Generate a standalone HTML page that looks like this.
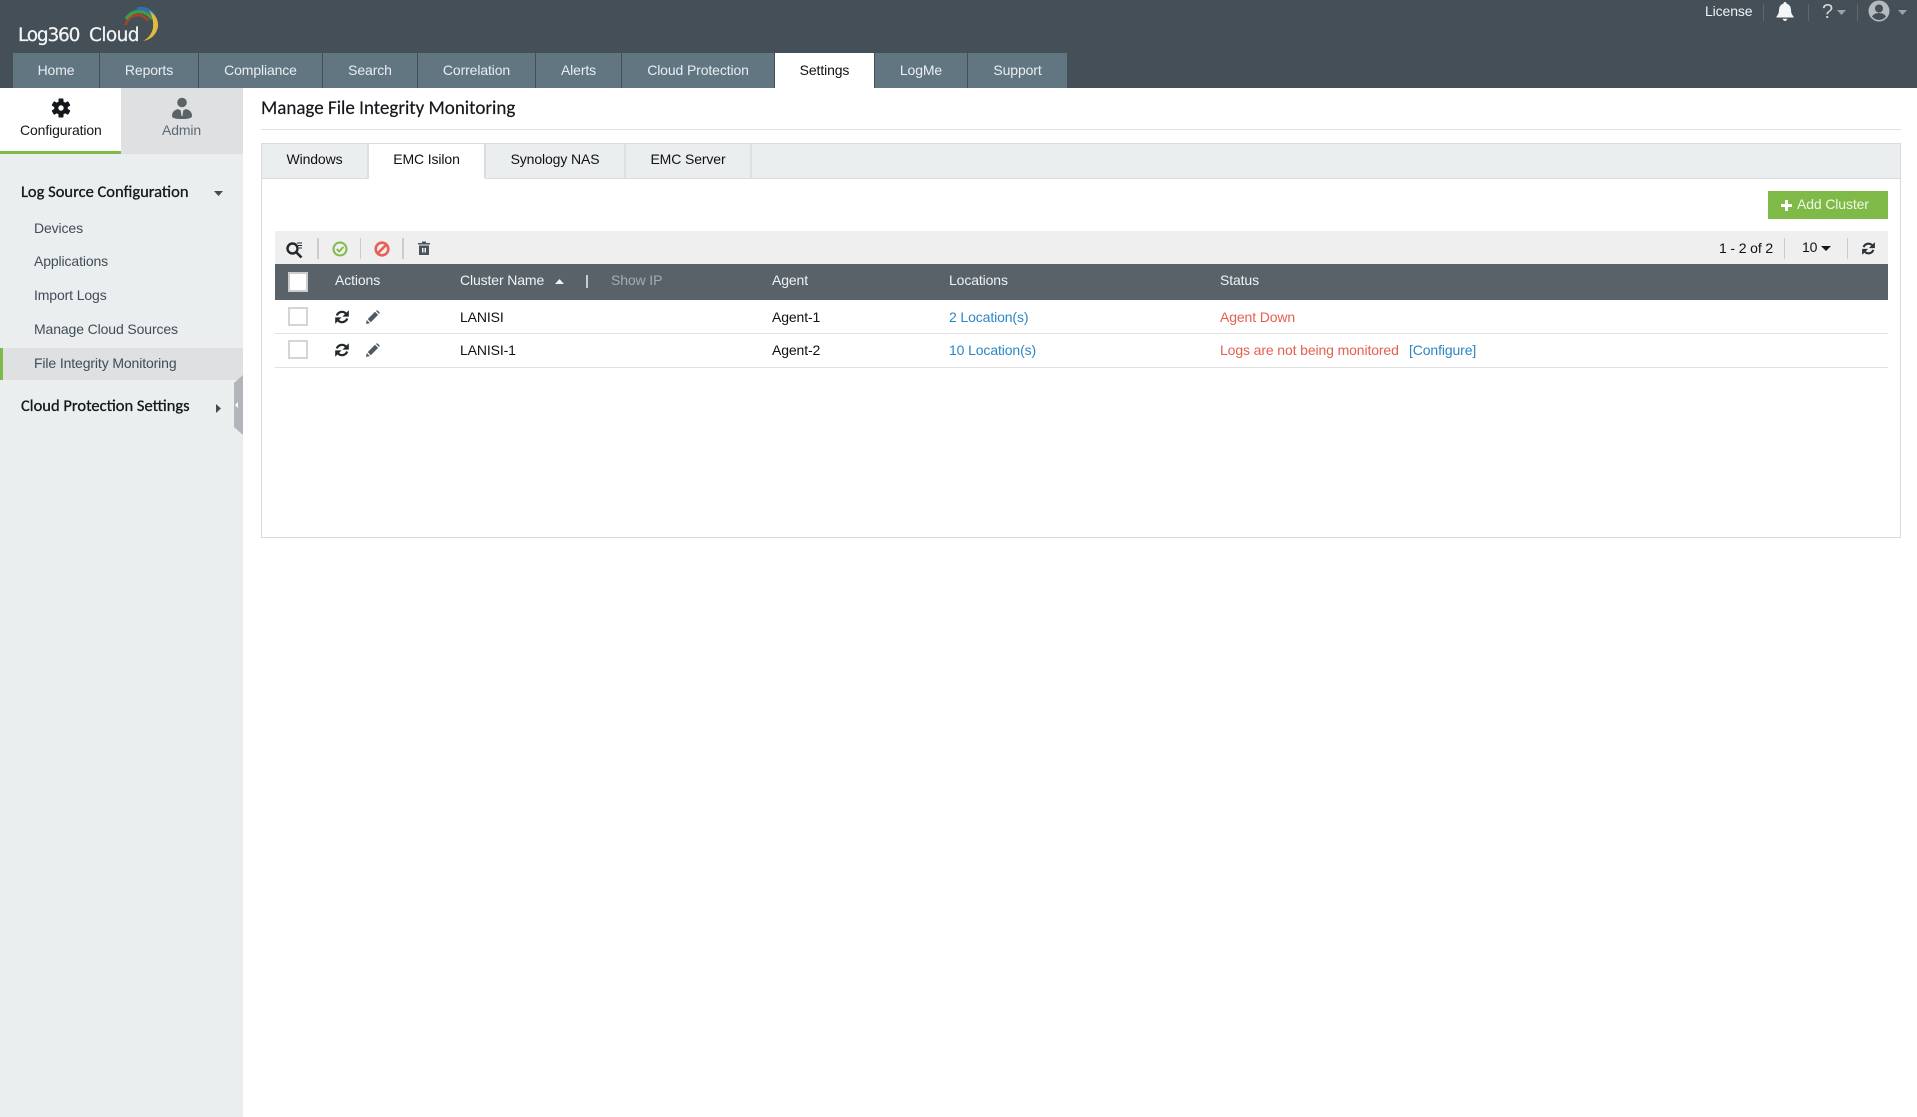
<!DOCTYPE html>
<html><head><meta charset="utf-8"><title>Manage File Integrity Monitoring</title>
<style>
*{box-sizing:border-box}
html,body{margin:0;padding:0;background:#fff;width:1917px;height:1117px;overflow:hidden}
body{position:relative;font-family:"Liberation Sans",sans-serif;font-size:14px;color:#111;letter-spacing:-.12px}
.a{position:absolute}
.t{position:absolute;white-space:nowrap;line-height:20px;height:20px}
.nav{position:absolute;top:53px;height:35px;background:#627682;color:#e8eef2;text-align:center;line-height:35px}
.lato{font-family:Carlito,"Liberation Sans",sans-serif;font-weight:400;font-size:16.5px;color:#14181c;letter-spacing:0;-webkit-text-stroke:.3px #14181c}
.side{color:#3f4d57;left:34px}
.tab{position:absolute;top:144px;height:35px;background:#ebeeef;border-right:2px solid #dde0e2;border-bottom:1px solid #d8dcde;text-align:center;line-height:30px}
.cb{position:absolute;left:288px;width:20px;height:19px;background:#fff;border:2px solid #d2d6d8}
svg{position:absolute;overflow:visible}
.link{color:#2b86c5}.red{color:#e55f4f}
.sep{position:absolute;background:#ccc}
.logo{font-size:18.5px;line-height:22px;height:22px;color:#f2f4f5;font-family:'DejaVu Sans',sans-serif;-webkit-text-stroke:.25px #f2f4f5}
</style></head><body>
<svg width="0" height="0" style="position:absolute"><defs>
<symbol id="ref" viewBox="0 0 16 16"><g fill="currentColor"><path d="M2.800 6.500A5.500 5.500 0 0 1 11.800 4.400" stroke="currentColor" stroke-width="2.200" fill="none"/><path d="M14.800 1.200V7.600H8.400Z"/><path d="M13.200 9.500A5.500 5.500 0 0 1 4.200 11.600" stroke="currentColor" stroke-width="2.200" fill="none"/><path d="M1.200 14.800V8.400H7.600Z"/></g></symbol>
<symbol id="pen" viewBox="0 0 14 14"><path d="M0 14L.8 10 3.900 13.100ZM1.700 9.100L9 1.800 12.100 4.900 4.800 12.200ZM9.900 .9Q10.900 -.1 11.900 .7L13.200 2Q14.100 3 13 4L9.900 .9Z" fill="#4d5a63"/></symbol>
</defs></svg>

<!-- header -->
<div class="a" style="left:0;top:0;width:1917px;height:88px;background:#444f57"></div>
<div class="t logo" style="left:18px;top:25px;letter-spacing:-1.200px">Log360</div>
<div class="t logo" style="left:89px;top:25px;letter-spacing:-.6px">Cloud</div>
<svg class="a" style="left:0;top:0" width="170" height="50" fill="none">
<path d="M125.500 25Q129 15 138 15Q144 15 148 21" stroke="#a5432c" stroke-width="2.800"/>
<path d="M126 19Q131 11.500 139 11.500Q147 11.500 152 19" stroke="#3f9a4c" stroke-width="3.400"/>
<path d="M137 9Q146 7 152 13Q157 19 156 27" stroke="#2f6fb8" stroke-width="3.200"/>
<path d="M149 10.500Q159 17 158 27Q155 39 143 41Q151 37 153 28Q154 18 149 10.500Z" fill="#e2bb3c"/>
</svg>
<div class="nav" style="left:13px;width:86px">Home</div>
<div class="nav" style="left:100px;width:98px">Reports</div>
<div class="nav" style="left:199px;width:123px">Compliance</div>
<div class="nav" style="left:323px;width:94px">Search</div>
<div class="nav" style="left:418px;width:117px">Correlation</div>
<div class="nav" style="left:536px;width:85px">Alerts</div>
<div class="nav" style="left:622px;width:152px">Cloud Protection</div>
<div class="nav" style="left:775px;width:99px;background:#fff;color:#111">Settings</div>
<div class="nav" style="left:875px;width:92px">LogMe</div>
<div class="nav" style="left:968px;width:99px">Support</div>

<div class="t" style="left:1705px;top:1px;color:#eef4f8">License</div>
<div class="sep" style="left:1763px;top:4px;width:1px;height:17px;background:#5c676e"></div>
<svg class="a" style="left:1776px;top:2px" width="18" height="19"><path d="M9 0Q10.500 0 10.500 1.500Q15 3 15 8Q15 12 17.500 14.500V15.500H.5V14.500Q3 12 3 8Q3 3 7.500 1.500Q7.500 0 9 0Z" fill="#f4f6f7"/><path d="M6.500 16.800H11.500Q10.500 19 9 19Q7.500 19 6.500 16.800Z" fill="#f4f6f7"/></svg>
<div class="sep" style="left:1808px;top:4px;width:1px;height:17px;background:#5c676e"></div>
<div class="t" style="left:1822px;top:2px;font-size:20px;color:#d4d8da">?</div>
<svg class="a" style="left:1837px;top:10px" width="10" height="5"><path d="M0 0H9L4.500 5Z" fill="#9aa3a8"/></svg>
<div class="sep" style="left:1857px;top:4px;width:1px;height:17px;background:#5c676e"></div>
<svg class="a" style="left:1868px;top:0" width="22" height="22"><circle cx="11" cy="11" r="10.500" fill="#b4babd"/><circle cx="11" cy="8.500" r="4" fill="#444f57"/><path d="M4 16.500Q6 13 11 13Q16 13 18 16.500Q15 20 11 20Q7 20 4 16.500Z" fill="#444f57"/></svg>
<svg class="a" style="left:1898px;top:10px" width="10" height="5"><path d="M0 0H9L4.500 5Z" fill="#9aa3a8"/></svg>

<!-- sidebar -->
<div class="a" style="left:0;top:88px;width:243px;height:1029px;background:#ebeeef"></div>
<div class="a" style="left:0;top:88px;width:121px;height:66px;background:#fff;border-bottom:3px solid #7fba48"></div>
<div class="a" style="left:121px;top:88px;width:122px;height:66px;background:#dfe0e2"></div>
<svg class="a" style="left:51px;top:98px" width="20" height="20"><g fill="#14181c"><circle cx="10" cy="10" r="6.800"/><g><rect x="7.500" y=".5" width="5" height="19" rx=".8"/><rect x="7.500" y=".5" width="5" height="19" rx=".8" transform="rotate(60 10 10)"/><rect x="7.500" y=".5" width="5" height="19" rx=".8" transform="rotate(120 10 10)"/></g></g><circle cx="10" cy="10" r="2.700" fill="#fff"/></svg>
<div class="t" style="left:20px;top:120px;color:#14181c">Configuration</div>
<svg class="a" style="left:172px;top:97px" width="20" height="23" fill="#5c6367"><circle cx="10" cy="5.500" r="4.800"/><path d="M0 19Q0 13.500 6 12L8.800 13.500 9.500 19H10.500L11.200 13.500 14 12Q20 13.500 20 19Q20 22 10 22Q0 22 0 19Z"/></svg>
<div class="t" style="left:162px;top:120px;color:#5d6b75">Admin</div>

<div class="t lato" style="left:21px;top:182px">Log Source Configuration</div>
<svg class="a" style="left:214px;top:191px" width="9" height="5"><path d="M0 0H9L4.500 5Z" fill="#3f4d57"/></svg>
<div class="t side" style="top:218px">Devices</div>
<div class="t side" style="top:251px">Applications</div>
<div class="t side" style="top:285px">Import Logs</div>
<div class="t side" style="top:319px">Manage Cloud Sources</div>
<div class="a" style="left:0;top:348px;width:243px;height:32px;background:#dfe0e2;border-left:3px solid #7fba48"></div>
<div class="t side" style="top:353px">File Integrity Monitoring</div>
<div class="t lato" style="left:21px;top:396px">Cloud Protection Settings</div>
<svg class="a" style="left:216px;top:404px" width="5" height="9"><path d="M0 0V9L5 4.500Z" fill="#3f4d57"/></svg>
<svg class="a" style="left:234px;top:375px" width="9" height="60"><path d="M9 0V60L0 52V8Z" fill="#b0b6ba"/><path d="M4 27V33L1 30Z" fill="#fff"/></svg>

<!-- main -->
<div class="t" style="left:261px;top:97px;height:24px;line-height:24px;font-family:Carlito,'Liberation Sans',sans-serif;font-weight:400;font-size:19px;letter-spacing:0;-webkit-text-stroke:.2px #14181c;color:#14181c">Manage File Integrity Monitoring</div>
<div class="a" style="left:261px;top:129px;width:1640px;height:1px;background:#dfe1e2"></div>
<div class="a" style="left:261px;top:143px;width:1640px;height:395px;border:1px solid #d8dcde;background:#fff"></div>
<div class="a" style="left:262px;top:144px;width:1638px;height:35px;background:#ebeeef;border-bottom:1px solid #d8dcde"></div>
<div class="tab" style="left:262px;width:107px">Windows</div>
<div class="tab" style="left:369px;width:117px;background:#fff;border-bottom:1px solid #fff;border-right:2px solid #d8dcde">EMC Isilon</div>
<div class="tab" style="left:486px;width:140px">Synology NAS</div>
<div class="tab" style="left:626px;width:126px">EMC Server</div>

<div class="a" style="left:1768px;top:191px;width:120px;height:28px;background:#7fba48"></div>
<svg class="a" style="left:1781px;top:200px" width="11" height="11"><path d="M4 0H7V4H11V7H7V11H4V7H0V4H4Z" fill="#fff"/></svg>
<div class="t" style="left:1797px;top:194px;color:#eef7e6">Add Cluster</div>

<!-- toolbar -->
<div class="a" style="left:275px;top:231px;width:1613px;height:33px;background:#efefef"></div>
<svg class="a" style="left:286px;top:241px" width="18" height="17" fill="none"><circle cx="6.500" cy="7.500" r="5" stroke="#22282c" stroke-width="2.400"/><path d="M10.500 11.500L15.500 16.500" stroke="#22282c" stroke-width="2.600"/><path d="M11 2H16M12 4.500H16M13 7H16" stroke="#22282c" stroke-width="1"/></svg>
<div class="sep" style="left:317px;top:238px;width:2px;height:21px"></div>
<svg class="a" style="left:332px;top:241px" width="16" height="16" fill="none"><circle cx="8" cy="8" r="6.500" stroke="#7fba48" stroke-width="2"/><path d="M4.800 8L7.200 10.500 11.500 5.800" stroke="#7fba48" stroke-width="1.800"/></svg>
<div class="sep" style="left:360px;top:238px;width:1px;height:21px"></div>
<svg class="a" style="left:374px;top:241px" width="16" height="16" fill="none"><circle cx="8" cy="8" r="6.300" stroke="#e8605a" stroke-width="2.600"/><path d="M3.500 12.500L12.500 3.500" stroke="#e8605a" stroke-width="2.600"/></svg>
<div class="sep" style="left:402px;top:238px;width:2px;height:21px"></div>
<svg class="a" style="left:418px;top:241px" width="12" height="14" fill="#47545d"><path d="M0 2H4V0.500H8V2H12V3.500H0ZM1 4.500H11V14H1ZM4 7V11.500H5.500V7ZM6.500 7V11.500H8V7Z" fill-rule="evenodd"/></svg>
<div class="t" style="left:1719px;top:238px">1 - 2 of 2</div>
<div class="sep" style="left:1784px;top:238px;width:1px;height:21px"></div>
<div class="t" style="left:1802px;top:237px">10</div>
<svg class="a" style="left:1821px;top:246px" width="10" height="5"><path d="M0 0H10L5 5Z" fill="#14181c"/></svg>
<div class="sep" style="left:1847px;top:238px;width:1px;height:21px"></div>
<svg class="a" style="left:1861px;top:241px;color:#2c3236" width="15" height="15"><use href="#ref"/></svg>

<!-- table header -->
<div class="a" style="left:275px;top:264px;width:1613px;height:36px;background:#586268"></div>
<div class="cb" style="top:272px;height:20px;border-color:#c9cdd0"></div>
<div class="t" style="left:335px;top:270px;color:#f0f3f5">Actions</div>
<div class="t" style="left:460px;top:270px;color:#f0f3f5">Cluster Name</div>
<svg class="a" style="left:555px;top:279px" width="9" height="5"><path d="M4.500 0L9 5H0Z" fill="#f0f3f5"/></svg>
<div class="a" style="left:586px;top:275px;width:2px;height:13px;background:#c6ccd0"></div>
<div class="t" style="left:611px;top:270px;color:#a3acb2">Show IP</div>
<div class="t" style="left:772px;top:270px;color:#f0f3f5">Agent</div>
<div class="t" style="left:949px;top:270px;color:#f0f3f5">Locations</div>
<div class="t" style="left:1220px;top:270px;color:#f0f3f5">Status</div>

<!-- rows -->
<div class="cb" style="top:307px"></div>
<svg class="a" style="left:334px;top:309px;color:#22282c" width="16" height="16"><use href="#ref"/></svg>
<svg class="a" style="left:366px;top:310px" width="14" height="14"><use href="#pen"/></svg>
<div class="t" style="left:460px;top:307px">LANISI</div>
<div class="t" style="left:772px;top:307px">Agent-1</div>
<div class="t link" style="left:949px;top:307px">2 Location(s)</div>
<div class="t red" style="left:1220px;top:307px">Agent Down</div>
<div class="a" style="left:275px;top:333px;width:1613px;height:1px;background:#dfe1e2"></div>

<div class="cb" style="top:340px"></div>
<svg class="a" style="left:334px;top:342px;color:#22282c" width="16" height="16"><use href="#ref"/></svg>
<svg class="a" style="left:366px;top:343px" width="14" height="14"><use href="#pen"/></svg>
<div class="t" style="left:460px;top:340px">LANISI-1</div>
<div class="t" style="left:772px;top:340px">Agent-2</div>
<div class="t link" style="left:949px;top:340px">10 Location(s)</div>
<div class="t red" style="left:1220px;top:340px">Logs are not being monitored</div>
<div class="t link" style="left:1409px;top:340px">[Configure]</div>
<div class="a" style="left:275px;top:367px;width:1613px;height:1px;background:#dfe1e2"></div>
</body></html>
